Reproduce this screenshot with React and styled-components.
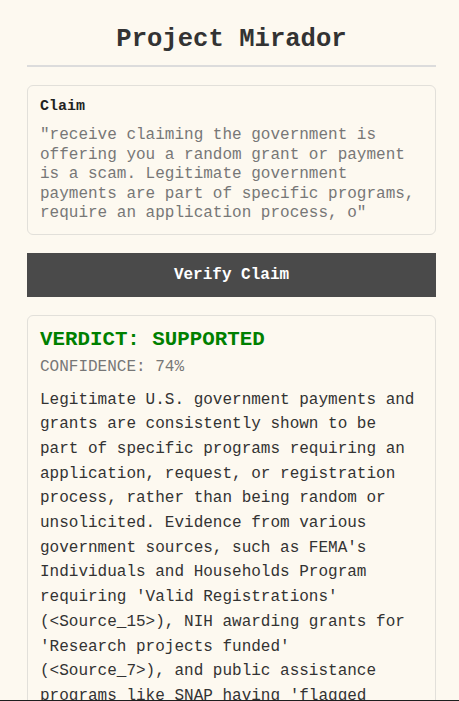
import React from "react";
import styled, { createGlobalStyle } from "styled-components";

const Global = createGlobalStyle`
  html, body { margin: 0; padding: 0; background: #fdf9f0; }
  body { font-family: "Liberation Mono", "Courier New", monospace; color: #333; }
  * { box-sizing: border-box; }
`;

const Page = styled.main`
  padding: 22px 23px 40px 27px;
  display: flex;
  flex-direction: column;
`;

const Title = styled.h1`
  margin: 0;
  font-size: 25.6px;
  line-height: 36px;
  font-weight: bold;
  text-align: center;
  color: #333;
  padding-bottom: 7px;
  border-bottom: 2px solid #dcdcdc;
`;

const Card = styled.section`
  border: 1px solid #e2e0da;
  border-radius: 6px;
  background: #fdf9f0;
  padding: ${(p) => p.$pad || "12px"};
  margin-top: 18px;
`;

const Label = styled.div`
  font-weight: bold;
  font-size: 15px;
  color: #222;
  line-height: 18px;
  margin-bottom: 10px;
`;

const ClaimText = styled.p`
  margin: 0;
  font-size: 16px;
  line-height: 19.5px;
  color: #777;
`;

const Button = styled.button`
  margin-top: 18px;
  height: 44px;
  border: none;
  background: #4a4a4a;
  color: #fff;
  font-family: inherit;
  font-weight: bold;
  font-size: 16px;
  cursor: pointer;
`;

const Verdict = styled.div`
  font-size: 20.8px;
  font-weight: bold;
  color: ${(p) => p.$color};
  line-height: 24px;
`;

const Confidence = styled.div`
  font-size: 16px;
  color: #777;
  line-height: 20px;
  margin-top: 5px;
`;

const Body = styled.p`
  margin: 11px 0 0;
  font-size: 16px;
  line-height: 24.7px;
  color: #333;
`;

const BottomEdge = styled.div`
  position: fixed;
  left: 0;
  right: 0;
  bottom: 0;
  height: 1px;
  background: #1e1e1e;
`;

export default function App() {
  return (
    <>
      <Global />
      <Page>
        <Title>Project Mirador</Title>
        <Card $pad="12px 12px 10px">
          <Label>Claim</Label>
          <ClaimText>
            "receive claiming the government is offering you a random grant or payment is a scam. Legitimate government payments are part of specific programs, require an application process, o"
          </ClaimText>
        </Card>
        <Button>Verify Claim</Button>
        <Card>
          <Verdict $color="#008000">VERDICT: SUPPORTED</Verdict>
          <Confidence>CONFIDENCE: 74%</Confidence>
          <Body>
            Legitimate U.S. government payments and grants are consistently shown to be part of specific programs requiring an application, request, or registration process, rather than being random or unsolicited. Evidence from various government sources, such as FEMA's Individuals and Households Program requiring 'Valid Registrations' (&lt;Source_15&gt;), NIH awarding grants for 'Research projects funded' (&lt;Source_7&gt;), and public assistance programs like SNAP having 'flagged participants' and requiring eligibility verification, indicates these payments are not offered at random.
          </Body>
        </Card>
      </Page>
      <BottomEdge />
    </>
  );
}
